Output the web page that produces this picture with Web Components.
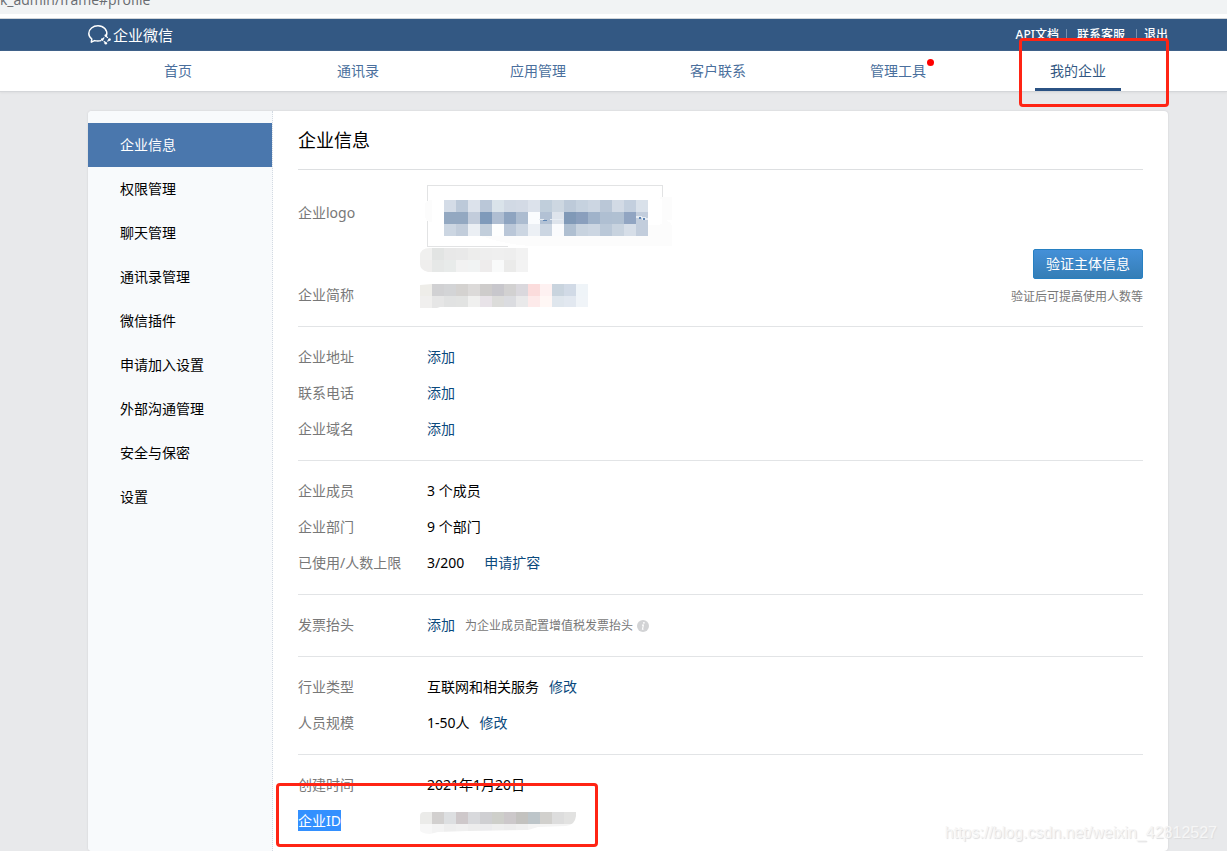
<!DOCTYPE html>
<html lang="zh-CN">
<head>
<meta charset="utf-8">
<title>企业微信 - 企业信息</title>
<style>
  html { background: #e8e9eb; }
  body { margin: 0; font: 14px/20px "Noto Sans", "Noto Sans CJK SC", sans-serif; color: #000; }
</style>
</head>
<body>
<admin-app></admin-app>

<script>
const define = (name, html, setup) => {
  const template = document.createElement('template');
  template.innerHTML = html;
  customElements.define(name, class extends HTMLElement {
    connectedCallback() {
      if (this.shadowRoot) return;
      const root = this.attachShadow({ mode: 'open' });
      root.append(template.content.cloneNode(true));
      if (setup) setup(this, root);
    }
  });
};

/* Browser address strip above the page */
define('address-strip', `
  <style>
    :host { display: flex; align-items: flex-start; height: 14px; overflow: hidden; background: #f1f3f4; border-bottom: 4px solid #fff; color: #686b70; }
    span { font: 14px/20px "Open Sans", sans-serif; margin-top: -10px; }
  </style>
  <span><slot></slot></span>`);

define('top-bar', `
  <style>
    :host { display: flex; align-items: center; justify-content: space-between; height: 32px; padding: 0 59px 0 88px; background: #335883; border-top: 1px solid #d0d4d8; color: #fff; }
    .brand { display: flex; align-items: center; gap: 2px; color: inherit; text-decoration: none; font-size: 15px; line-height: 18px; }
    svg { display: block; }
    nav { display: flex; align-items: center; font-size: 12px; font-weight: 500; line-height: 30px; }
    nav a { color: #fff; text-decoration: none; }
    i { width: 1px; height: 12px; background: #7690ae; margin: 0 7px; }
    i:first-of-type { margin-right: 10px; }
    i:last-of-type { margin-left: 11px; margin-right: 7px; }
  </style>
  <a class="brand" href="#home">
    <svg width="23" height="22" viewBox="0 0 23 22" fill="none" stroke="#fff" stroke-width="1.5" stroke-linejoin="round" aria-hidden="true">
      <path d="M18.6 11.2C19.8 6.1 15.6 1.8 10 1.8 5 1.8.8 5.2.8 9.4c0 2.3 1.2 4.2 3 5.6l-.5 3.2 3.2-1.6c2.2.6 4.4.6 6.6 0"/>
      <path stroke-width="1.2" d="M17.9 11.4c.2 1.3.9 2 2.1 2.3M21.9 15.5c-1.3.2-2 .9-2.3 2.1M17.8 19.6c-.2-1.3-.9-2-2.1-2.3M13.8 15.5c1.3-.2 2-.9 2.3-2.1"/>
      <g fill="#fff" stroke="none"><circle cx="17.8" cy="11.6" r="1.3"/><circle cx="21.5" cy="15.6" r="1.3"/><circle cx="17.8" cy="19.3" r="1.3"/><circle cx="14.2" cy="15.6" r="1.3"/></g>
    </svg>
    <span>企业微信</span>
  </a>
  <nav><a href="#api">API文档</a><i></i><a href="#service">联系客服</a><i></i><a href="#logout">退出</a></nav>`);

define('main-nav', `
  <style>
    :host { display: grid; grid-template-columns: repeat(6, 1fr); height: 40px; padding: 0 59px 0 88px; background: #fff; border-bottom: 1px solid #d4d6d9; box-shadow: 0 1px 2px #dcdddf; }
  </style>
  <slot></slot>`);

define('nav-item', `
  <style>
    :host { display: flex; justify-content: center; position: relative; }
    a { position: relative; box-sizing: border-box; height: 40px; line-height: 40px; color: #4a6f9d; text-decoration: none; }
    :host([active]) a { padding: 0 15px; border-bottom: 3px solid #2b5283; color: #335883; }
    :host([dot]) a::after { content: ""; position: absolute; top: 8px; right: -8px; width: 7px; height: 7px; border-radius: 50%; background: #f00; }
    ::slotted(mark-frame) { inset: -13px -1px -16px 31px; }
  </style>
  <a><slot></slot></a><slot name="mark"></slot>`,
  (el, root) => { root.querySelector('a').href = el.getAttribute('href'); });

/* Red annotation frame, laid over its container */
define('mark-frame', `
  <style>:host { display: block; position: absolute; box-sizing: border-box; border: 3px solid #ff2414; border-radius: 4px; pointer-events: none; z-index: 2; }</style>`);

define('side-menu', `
  <style>
    :host { display: block; width: 184px; flex: none; padding-top: 12px; background: #f8fafc; border-right: 1px dotted #d3dae2; border-radius: 4px 0 0 4px; }
  </style>
  <nav><slot></slot></nav>`);

define('side-item', `
  <style>
    :host { display: block; }
    a { display: block; padding-left: 32px; line-height: 44px; color: #000; text-decoration: none; }
    :host([active]) a { background: #4a77ad; color: #fff; }
  </style>
  <a><slot></slot></a>`,
  (el, root) => { root.querySelector('a').href = el.getAttribute('href'); });

define('info-section', `
  <style>
    :host { display: flex; justify-content: space-between; padding: 12px 0 13px; border-bottom: 1px solid #e2e4e6; }
    :host(:last-of-type) { border-bottom: 0; padding-bottom: 12px; }
    .rows { flex: 1; }
    ::slotted([slot=side]) { align-self: flex-end; }
  </style>
  <div class="rows"><slot></slot></div><slot name="side"></slot>`);

define('info-row', `
  <style>
    :host { display: flex; position: relative; line-height: 36px; min-height: 36px; }
    .label { width: 129px; flex: none; color: #787878; }
    .value { display: flex; align-items: center; }
    :host([tall]) { height: 95px; }
    :host([tall]) .label { padding-top: 13px; }
    :host([tall]) .value { align-items: flex-start; }
    :host([selected]) .label span { background: #3390ff; color: #fff; padding: 1px 0; line-height: 20px; }
    ::slotted(mark-frame) { inset: -20px auto -8px -22px; width: 322px; }
  </style>
  <div class="label"><span></span></div><div class="value"><slot></slot></div><slot name="mark"></slot>`,
  (el, root) => { root.querySelector('.label span').textContent = el.getAttribute('label'); });

define('text-link', `
  <style>
    :host { display: inline; }
    :host([after]) { margin-left: 10px; }
    :host([after=wide]) { margin-left: 20px; }
    a { color: #0b4a7d; text-decoration: none; }
  </style>
  <a href="#edit"><slot></slot></a>`);

define('field-hint', `
  <style>
    :host { display: flex; align-items: center; gap: 4px; margin-left: 10px; padding-top: 2px; font-size: 12px; line-height: 20px; color: #787878; }
    svg { display: block; }
  </style>
  <slot></slot>
  <svg width="12" height="12" viewBox="0 0 12 12" role="img" aria-label="说明"><circle cx="6" cy="6" r="6" fill="#d2d3d5"/><circle cx="6.9" cy="2.8" r=".9" fill="#fff"/><path d="M5 5.1h1.4L5.5 9.2h1" fill="none" stroke="#fff" stroke-width="1.1"/></svg>`);

define('verify-action', `
  <style>
    :host { display: flex; flex-direction: column; align-items: flex-end; gap: 9px; margin-bottom: 7px; }
    button { height: 30px; padding: 0 12px; border: 1px solid #2780c2; border-radius: 2px; background: linear-gradient(#4490d8, #357eb6); color: #fff; font: inherit; line-height: 28px; box-sizing: border-box; }
    small { font-size: 12px; line-height: 18px; color: #787878; }
  </style>
  <button type="button">验证主体信息</button>
  <small>验证后可提高使用人数等</small>`);

/* Pixelated values: rows of 12px cells, one hex colour each */
const MOSAICS = {
  logo: { height: 95,
    before: '<path d="M242.500 62V3.500H7.500V64.500H88" fill="none" stroke="#e2e3e4"/><path d="M5 24q0-6 7-6v22q-7 0-7-8zM50 50H224V43H240V15H252V38H246q6 3 6 8v18H110q-30-2-60-14z" fill="#fcfcfc"/><path d="M224 42h18V17h-14v25z" fill="#fff"/>',
    after: '<path d="M119 37h5v1h-5zM130 37h13v1h-13zM216 34h6v1h4v1h2v2h-6v-2h-6z" fill="#e6ecf3"/><path d="M123 38h4v1h-4zM219 35h2v2h-2zM223 36h2v2h-2z" fill="#5f86b4"/>',
    grids: [
      [24, 18, 12, ['d4dce7 bcc9d9 dce2eb bac7d8 dae3ea d1d9e4 d3dae5 dce2eb c0cedb cdd7e1 bdcad9 c6d2df ccd6e2 bac7d7 d2dae5 c3cfde d9e1ea',
        '93a8c1 93a8c1 c2ccdb 7f9aba afbed2 8ea4c0 acbcd0 fafcfe b2c1d4 dee4ec 8099b7 8a9fbd a0b3ca afbfd2 b0c0d2 91a5c2 c2cddc',
        'ccd6e2 c2cddb ebeff4 c2cedb fdfefe bac7d8 ccd6e2 ecf0f5 ccd6e2 fafbfd afbfd1 c8d3df ccd6e2 bac8d8 c8d3df d6dee8 c2cddc']],
      [0, 66, 12, ['f0f0ef e2e4e3 e8e8e8 e9e9e9 ededec eeeeee efefef eeeeee f2f2f2',
        'efeeed e6e8e7 e8ebea f2f2f2 f1f3f3 eeecec f9fafa ebebea f3f3f3']]] },
  name: { height: 36, grids: [[0, 7, 12, ['eeede9 d1d1d3 d3d4d6 d4d2d0 dcdad9 cecccb c8c7cc d2d1d1 dad8dd fbdcdc fef1f1 c9d4de d1dae6 eff4f8',
      'f0efee e6e6e6 e1e2e2 e2e3e2 f0f0ef e8e3e8 dcdcda dbdce0 e9e9ea fdeaea fff7f5 dfe6ed e2e8f0 f0f4f8']]] },
  id: { height: 36, grids: [[0, 9, 12, ['ebebe9 d2d0cf dddfe1 cec8ca d8d9dc cfcfd2 cecfca ccc8ca c3c2bf bdc5c9 d1d0cd dddddd e2e2e1',
      'f7f7f7 f3f3f3 eeeeee f0f0f0 ededed ececee efefef ededed f0f0f0 f4f4f4 f4f4f4 f4f4f4 f4f4f4']]] }
};
define('mosaic-block', `
  <style>:host { display: block; margin-left: -7px; } svg { display: block; }</style>`,
  (el, root) => {
    const kind = el.getAttribute('kind');
    const m = MOSAICS[kind];
    const cells = m.grids.map(([x, y, s, rows]) => rows.map((row, r) =>
      row.split(' ').map((c, i) => `<rect x="${x + i * s}" y="${y + r * s}" width="${s}" height="${s}" fill="#${c}"/>`).join('')).join('')).join('');
    const clips = {
      logo: 'M0 0H252V95H0V84V90H8Q0 88 0 82V74Q0 66 10 66H12V64H0z',
      name: 'M0 8L12 7H168V30H20L17 31H0z',
      id: 'M0 13Q0 9 4 9H156V13Q155 22 146 23L118 24 108 27 48 28 18 29 10 31Q0 30 0 27z'
    };
    root.innerHTML += `<svg width="252" height="${m.height}" viewBox="0 0 252 ${m.height}" shape-rendering="crispEdges" aria-hidden="true">
      <clipPath id="c"><path d="${clips[kind]}"/></clipPath>${m.before || ''}<g clip-path="url(#c)">${cells}</g>${m.after || ''}</svg>`;
  });

define('page-card', `
  <style>
    :host { display: flex; margin: 19px 59px 0 88px; background: #fff; border-radius: 4px; box-shadow: 0 0 2px #c8cacd; }
    main { flex: 1; min-width: 0; padding: 0 25px; }
    h1 { margin: 0; font-size: 18px; font-weight: 400; line-height: 58px; border-bottom: 1px solid #dddfe1; }
  </style>
  <slot name="menu"></slot>
  <main><h1>企业信息</h1><slot></slot></main>`);

define('water-mark', `
  <style>:host { position: absolute; right: 10px; bottom: 8px; font: 16px/20px "Liberation Sans", sans-serif; color: #f6f6f6; text-shadow: 1px 1px 1px #dcdcdd; z-index: 3; }</style>
  <slot></slot>`);

define('admin-app', `
  <style>:host { display: block; position: relative; min-height: 100vh; }</style>
  <address-strip>k_admin/frame#profile</address-strip>
  <top-bar></top-bar>
  <main-nav>
    <nav-item href="#index">首页</nav-item>
    <nav-item href="#contacts">通讯录</nav-item>
    <nav-item href="#apps">应用管理</nav-item>
    <nav-item href="#customer">客户联系</nav-item>
    <nav-item href="#tools" dot>管理工具</nav-item>
    <nav-item href="#profile" active>我的企业<mark-frame slot="mark"></mark-frame></nav-item>
  </main-nav>
  <page-card>
    <side-menu slot="menu">
      <side-item href="#profile" active>企业信息</side-item>
      <side-item href="#role">权限管理</side-item>
      <side-item href="#chat">聊天管理</side-item>
      <side-item href="#book">通讯录管理</side-item>
      <side-item href="#plugin">微信插件</side-item>
      <side-item href="#join">申请加入设置</side-item>
      <side-item href="#external">外部沟通管理</side-item>
      <side-item href="#security">安全与保密</side-item>
      <side-item href="#setting">设置</side-item>
    </side-menu>
    <info-section>
      <info-row label="企业logo" tall><mosaic-block kind="logo"></mosaic-block></info-row>
      <info-row label="企业简称"><mosaic-block kind="name"></mosaic-block></info-row>
      <verify-action slot="side"></verify-action>
    </info-section>
    <info-section>
      <info-row label="企业地址"><text-link>添加</text-link></info-row>
      <info-row label="联系电话"><text-link>添加</text-link></info-row>
      <info-row label="企业域名"><text-link>添加</text-link></info-row>
    </info-section>
    <info-section>
      <info-row label="企业成员">3 个成员</info-row>
      <info-row label="企业部门">9 个部门</info-row>
      <info-row label="已使用/人数上限">3/200<text-link after="wide">申请扩容</text-link></info-row>
    </info-section>
    <info-section>
      <info-row label="发票抬头"><text-link>添加</text-link><field-hint>为企业成员配置增值税发票抬头</field-hint></info-row>
    </info-section>
    <info-section>
      <info-row label="行业类型">互联网和相关服务<text-link after>修改</text-link></info-row>
      <info-row label="人员规模">1-50人<text-link after>修改</text-link></info-row>
    </info-section>
    <info-section>
      <info-row label="创建时间">2021年1月20日</info-row>
      <info-row label="企业ID" selected><mosaic-block kind="id"></mosaic-block><mark-frame slot="mark"></mark-frame></info-row>
    </info-section>
  </page-card>
  <water-mark>https://blog.csdn.net/weixin_42812527</water-mark>`);
</script>
</body>
</html>
